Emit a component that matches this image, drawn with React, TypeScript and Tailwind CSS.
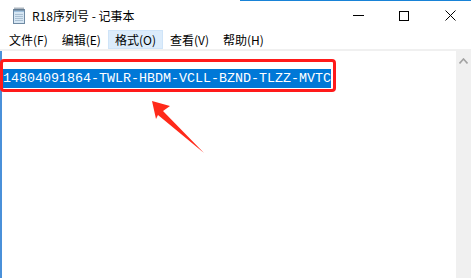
import React from "react"

const ui = { fontFamily: '"Noto Sans CJK SC", "Noto Sans", sans-serif' }
const mono = { fontFamily: '"Liberation Mono", "DejaVu Sans Mono", monospace' }

const menus = ["文件(F)", "编辑(E)", "格式(O)", "查看(V)", "帮助(H)"]

function NotepadIcon() {
  return (
    <svg width="14" height="17" viewBox="0 0 14 17">
      <rect x="1.5" y="2.5" width="11" height="14" fill="#d6e6f3" stroke="#6f8aa3" />
      <rect x="2" y="3" width="10" height="2" fill="#9fc1de" />
      {[3, 5, 7, 9, 11].map((x) => (
        <line key={x} x1={x} y1="0.5" x2={x} y2="4" stroke="#5c6f80" strokeWidth="1" />
      ))}
      {[7.5, 9.5, 11.5, 13.5].map((y) => (
        <line key={y} x1="3" y1={y} x2="11" y2={y} stroke="#a9bfd2" strokeWidth="1" />
      ))}
    </svg>
  )
}

export default function App() {
  return (
    <div className="relative w-[471px] h-[278px] overflow-hidden bg-white flex flex-col text-black" style={ui}>
      {/* window top edge */}
      <div className="flex h-[1px] shrink-0">
        <div className="w-[240px]" />
        <div className="flex-1 bg-[#1883d7]" />
      </div>

      {/* title bar */}
      <div className="flex items-center h-[29px] shrink-0">
        <div className="ml-[12px] mt-[-1px]">
          <NotepadIcon />
        </div>
        <span className="ml-[6px] text-[12px] leading-none">R18序列号 - 记事本</span>
        <div className="flex-1" />
        <div className="flex mr-[-2px] h-full">
          <div className="w-[46px] flex items-center justify-center">
            <div className="w-[11px] h-[1px] bg-black" />
          </div>
          <div className="w-[46px] flex items-center justify-center">
            <div className="w-[10px] h-[10px] border border-black" />
          </div>
          <div className="w-[46px] flex items-center justify-center">
            <svg width="11" height="11" viewBox="0 0 11 11">
              <path d="M0.5 0.5 L10.5 10.5 M10.5 0.5 L0.5 10.5" stroke="#000" strokeWidth="1" />
            </svg>
          </div>
        </div>
      </div>

      {/* menu bar */}
      <div className="flex items-stretch h-[19px] pl-[2px] shrink-0 text-[12px]">
        {menus.map((m, i) => (
          <div
            key={m}
            className={
              "flex items-center px-[6px] border leading-none " +
              (i === 2 ? "bg-[#dcecfb] border-[#cfe4f8]" : "border-transparent")
            }
          >
            {m}
          </div>
        ))}
      </div>
      <div className="h-[2px] bg-[#f0f0f0] shrink-0" />

      {/* edit area */}
      <div className="flex flex-1 min-h-0">
        <div className="flex-1 border-l-[2px] border-[#4a90d9]">
          <div className="mt-[8px] ml-[-2px] w-[336px] h-[33px] border-[3px] border-[#ff1a1a] rounded-[4px] pt-[1px]">
            <span
              className="inline-block h-[19px] leading-[19px] text-[13.33px] text-white bg-[#0078d7] whitespace-pre"
              style={mono}
            >
              14804091864-TWLR-HBDM-VCLL-BZND-TLZZ-MVTC
            </span>
          </div>
        </div>
        <div className="w-[15px] bg-[#f0f0f0] flex justify-center pt-[7px]">
          <svg width="9" height="6" viewBox="0 0 9 6">
            <path d="M0.5 5.5 L4.5 1 L8.5 5.5" fill="none" stroke="#a3a3a3" strokeWidth="1.6" />
          </svg>
        </div>
      </div>

      {/* annotation arrow */}
      <svg className="absolute left-0 top-0 pointer-events-none" width="471" height="278">
        <polygon
          points="152,101 170,106 163,111 204,153 158,115 156,119"
          fill="#ff2a1a"
        />
      </svg>
    </div>
  )
}
